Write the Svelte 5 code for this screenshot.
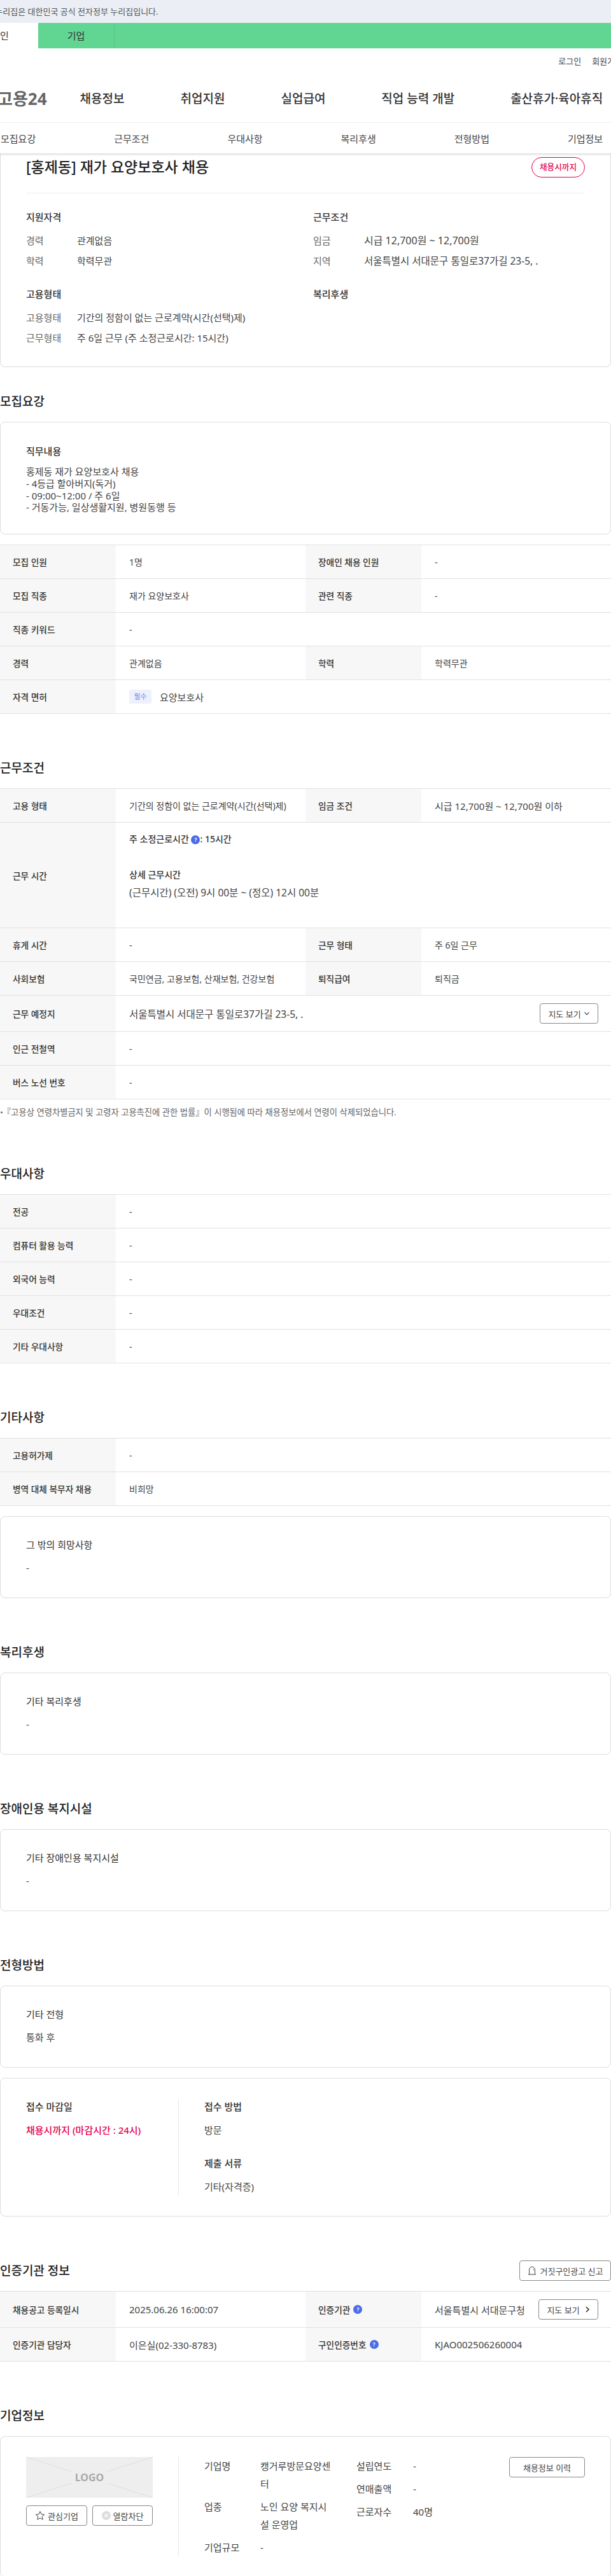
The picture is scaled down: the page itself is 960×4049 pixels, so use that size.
<script>
  const navItems = ["채용정보", "취업지원", "실업급여", "직업 능력 개발", "출산휴가·육아휴직"];
  const tabs = ["모집요강", "근무조건", "우대사항", "복리후생", "전형방법", "기업정보"];

  const recruitRows = [
    ["모집 인원", "1명", "장애인 채용 인원", "-"],
    ["모집 직종", "재가 요양보호사", "관련 직종", "-"],
    ["직종 키워드", "-"],
    ["경력", "관계없음", "학력", "학력무관"],
  ];
  const prefRows = [
    ["전공", "-"],
    ["컴퓨터 활용 능력", "-"],
    ["외국어 능력", "-"],
    ["우대조건", "-"],
    ["기타 우대사항", "-"],
  ];
  const etcRows = [
    ["고용허가제", "-"],
    ["병역 대체 복무자 채용", "비희망"],
  ];
  const salary = "시급 12,700원 ~ 12,700원 이하";
</script>

{#snippet row(cells)}
  <div class="row" class:wide={cells.length === 2}>
    <div class="th">{cells[0]}</div>
    <div class="td">{cells[1]}</div>
    {#if cells.length > 2}
      <div class="th">{cells[2]}</div>
      <div class="td" class:big={cells[3] === salary}>{cells[3]}</div>
    {/if}
  </div>
{/snippet}

{#snippet help()}
  <span class="help">?</span>
{/snippet}

<div class="page">
  <div class="gov">이 누리집은 대한민국 공식 전자정부 누리집입니다.</div>

  <div class="green">
    <span class="mode on">개인</span>
    <span class="mode">기업</span>
  </div>

  <div class="util">
    <span>로그인</span>
    <span>회원가입</span>
  </div>

  <nav class="gnb">
    <span class="logo">고용24</span>
    {#each navItems as item}
      <span class="gnb-item">{item}</span>
    {/each}
  </nav>

  <div class="tabs">
    {#each tabs as tab}
      <span class="tab">{tab}</span>
    {/each}
  </div>

  <div class="card summary">
    <div class="summary-head">
      <h1>[홍제동] 재가 요양보호사 채용</h1>
      <span class="deadline">채용시까지</span>
    </div>
    <div class="summary-grid">
      <div>
        <h3>지원자격</h3>
        <div class="kv"><span>경력</span><span>관계없음</span></div>
        <div class="kv"><span>학력</span><span>학력무관</span></div>
      </div>
      <div>
        <h3>근무조건</h3>
        <div class="kv"><span>임금</span><span class="pay">시급 12,700원 ~ 12,700원</span></div>
        <div class="kv"><span>지역</span><span class="addr">서울특별시 서대문구 통일로37가길 23-5, .</span></div>
      </div>
      <div>
        <h3>고용형태</h3>
        <div class="kv"><span>고용형태</span><span>기간의 정함이 없는 근로계약(시간(선택)제)</span></div>
        <div class="kv"><span>근무형태</span><span>주 6일 근무 (주 소정근로시간: 15시간)</span></div>
      </div>
      <div>
        <h3>복리후생</h3>
      </div>
    </div>
  </div>

  <section class="first">
    <h2>모집요강</h2>
    <div class="card text-card job">
      <h3>직무내용</h3>
      <p>홍제동 재가 요양보호사 채용<br />- 4등급 할아버지(독거)<br />- 09:00~12:00 / 주 6일<br />- 거동가능, 일상생활지원, 병원동행 등</p>
    </div>
    <div class="table after-card">
      {#each recruitRows as cells}
        {@render row(cells)}
      {/each}
      <div class="row wide">
        <div class="th">자격 면허</div>
        <div class="td big"><span class="must">필수</span>요양보호사</div>
      </div>
    </div>
  </section>

  <section>
    <h2>근무조건</h2>
    <div class="table">
      {@render row(["고용 형태", "기간의 정함이 없는 근로계약(시간(선택)제)", "임금 조건", salary])}
      <div class="row wide">
        <div class="th">근무 시간</div>
        <div class="td hours">
          <strong>주 소정근로시간 {@render help()}: 15시간</strong><br /><br />
          <span class="sub">상세 근무시간</span><br />
          <span class="addr">(근무시간) (오전) 9시 00분 ~ (정오) 12시 00분</span><br /><br />
        </div>
      </div>
      {@render row(["휴게 시간", "-", "근무 형태", "주 6일 근무"])}
      {@render row(["사회보험", "국민연금, 고용보험, 산재보험, 건강보험", "퇴직급여", "퇴직금"])}
      <div class="row wide">
        <div class="th">근무 예정지</div>
        <div class="td between">
          <span class="addr">서울특별시 서대문구 통일로37가길 23-5, .</span>
          <button class="btn map">
            지도 보기
            <svg width="10" height="10" viewBox="0 0 10 10" fill="none" stroke="#444" stroke-width="1.2"><path d="M1.5 3.2 5 6.8l3.5-3.6" /></svg>
          </button>
        </div>
      </div>
      {@render row(["인근 전철역", "-"])}
      {@render row(["버스 노선 번호", "-"])}
    </div>
    <p class="note">『고용상 연령차별금지 및 고령자 고용촉진에 관한 법률』이 시행됨에 따라 채용정보에서 연령이 삭제되었습니다.</p>
  </section>

  <section class="pref">
    <h2>우대사항</h2>
    <div class="table">
      {#each prefRows as cells}
        {@render row(cells)}
      {/each}
    </div>
  </section>

  <section>
    <h2>기타사항</h2>
    <div class="table">
      {#each etcRows as cells}
        {@render row(cells)}
      {/each}
    </div>
    <div class="card text-card after-card">
      <h3>그 밖의 희망사항</h3>
      <p>-</p>
    </div>
  </section>

  <section>
    <h2>복리후생</h2>
    <div class="card text-card">
      <h3>기타 복리후생</h3>
      <p>-</p>
    </div>
  </section>

  <section>
    <h2>장애인용 복지시설</h2>
    <div class="card text-card">
      <h3>기타 장애인용 복지시설</h3>
      <p>-</p>
    </div>
  </section>

  <section>
    <h2>전형방법</h2>
    <div class="card text-card">
      <h3>기타 전형</h3>
      <p>통화 후</p>
    </div>
    <div class="card apply after-card">
      <div class="apply-left">
        <h3>접수 마감일</h3>
        <p class="red">채용시까지 (마감시간 : 24시)</p>
      </div>
      <div class="apply-right">
        <h3>접수 방법</h3>
        <p>방문</p>
        <h3 class="docs">제출 서류</h3>
        <p>기타(자격증)</p>
      </div>
    </div>
  </section>

  <section>
    <div class="heading-row">
      <h2>인증기관 정보</h2>
      <button class="btn report">
        <svg width="16" height="16" viewBox="0 0 16 16" fill="none" stroke="#444" stroke-width="1"><path d="M3.500 14V7a4.500 5 0 0 1 9 0v7M2 14h12M9.500 5.500a2 2 0 0 1 1 2" /></svg>
        거짓구인광고 신고
      </button>
    </div>
    <div class="table">
      <div class="row">
        <div class="th">채용공고 등록일시</div>
        <div class="td big">2025.06.26 16:00:07</div>
        <div class="th">인증기관 {@render help()}</div>
        <div class="td big between">
          서울특별시 서대문구청
          <button class="btn map2">
            지도 보기
            <svg width="8" height="12" viewBox="0 0 8 12" fill="none" stroke="#333" stroke-width="1.6"><path d="M2 2l4 4-4 4" /></svg>
          </button>
        </div>
      </div>
      <div class="row">
        <div class="th">인증기관 담당자</div>
        <div class="td big">이은실(02-330-8783)</div>
        <div class="th">구인인증번호 {@render help()}</div>
        <div class="td big">KJAO002506260004</div>
      </div>
    </div>
  </section>

  <section>
    <h2>기업정보</h2>
    <div class="card company">
      <div class="company-left">
        <div class="logo-box">
          <svg width="199" height="64" viewBox="0 0 199 64" stroke="#ddd" stroke-width="1">
            <path d="M0 0l72 23M199 0l-72 23M0 64l72-23M199 64l-72-23" />
          </svg>
          <span>LOGO</span>
        </div>
        <div class="company-btns">
          <button class="btn">
            <svg width="16" height="16" viewBox="0 0 16 16" fill="none" stroke="#444" stroke-width="1"><path d="M8 1.500l2 4.400 4.700.5-3.500 3.200 1 4.700L8 11.900 3.800 14.300l1-4.700L1.300 6.400 6 5.900z" /></svg>
            관심기업
          </button>
          <button class="btn">
            <svg width="14" height="14" viewBox="0 0 14 14"><circle cx="7" cy="7" r="7" fill="#ddd" /><path d="M4.500 4.500l5 5M9.500 4.500l-5 5" stroke="#fff" stroke-width="1.300" /></svg>
            열람차단
          </button>
        </div>
      </div>
      <div class="company-info">
        <div class="info-col first-col">
          <div class="info"><span>기업명</span><span>캥거루방문요양센터</span></div>
          <div class="info"><span>업종</span><span>노인 요양 복지시설 운영업</span></div>
          <div class="info"><span>기업규모</span><span>-</span></div>
        </div>
        <div class="info-col second-col">
          <div class="info"><span>설립연도</span><span>-</span></div>
          <div class="info"><span>연매출액</span><span>-</span></div>
          <div class="info"><span>근로자수</span><span>40명</span></div>
        </div>
        <button class="btn history">채용정보 이력</button>
      </div>
    </div>
  </section>
</div>

<style>
  :global(body) {
    margin: 0;
    background: #fff;
  }

  .page {
    width: 960px;
    height: 4049px;
    overflow: hidden;
    font-family: "Noto Sans", "Noto Sans CJK KR", sans-serif;
    font-size: 15px;
    color: #444;
  }

  h1, h2, h3, p {
    margin: 0;
  }

  .gov {
    height: 36px;
    line-height: 36px;
    background: #ebeff5;
    font-size: 13px;
    color: #555;
    margin-left: -23px;
  }

  .green {
    display: flex;
    height: 40px;
    background: #61d592;
    margin-left: -60px;
  }

  .mode {
    width: 119px;
    line-height: 40px;
    text-align: center;
    color: #333;
    border-right: 1px solid #57c787;
  }

  .mode.on {
    background: #fff;
    width: 120px;
    border-right: 0;
  }

  .util {
    display: flex;
    justify-content: flex-end;
    gap: 17px;
    height: 39px;
    line-height: 40px;
    font-size: 13px;
    margin-right: -18px;
  }

  .gnb {
    display: flex;
    align-items: center;
    gap: 88px;
    height: 77px;
    border-bottom: 1px solid #eee;
    white-space: nowrap;
  }

  .logo {
    font-size: 26px;
    font-weight: 700;
    color: #666;
    margin-left: -4px;
    margin-right: -36px;
  }

  .gnb-item {
    font-size: 19px;
    font-weight: 500;
    color: #333;
  }

  .tabs {
    position: relative;
    display: flex;
    height: 48px;
    align-items: center;
    padding-left: 1px;
    background: #fff;
    box-shadow: 0 2px 3px rgba(0, 0, 0, 0.14);
  }

  .tab {
    flex: 0 0 178.2px;
    white-space: nowrap;
  }

  .card {
    border: 1px solid #ddd;
    border-radius: 8px;
  }

  .summary {
    border-top: 0;
    border-radius: 0 0 8px 8px;
    padding: 6px 40px 30px;
    height: 336px;
    box-sizing: border-box;
  }

  .summary-head {
    display: flex;
    justify-content: space-between;
    align-items: center;
    height: 32px;
    padding-bottom: 24px;
    border-bottom: 1px solid #eee;
  }

  h1 {
    font-size: 23px;
    font-weight: 500;
    line-height: 32px;
    color: #222;
    margin-top: -2px;
  }

  .deadline {
    box-sizing: border-box;
    width: 84px;
    height: 32px;
    line-height: 29px;
    text-align: center;
    border: 1px solid #e5004f;
    border-radius: 16px;
    color: #e5004f;
    font-size: 12.6px;
    font-weight: 500;
  }

  h3 {
    font-size: 15px;
    font-weight: 500;
    line-height: 24px;
    color: #333;
  }

  .summary-grid {
    display: grid;
    grid-template-columns: 451px 1fr;
    row-gap: 24px;
    margin-top: 25px;
  }

  .summary-grid h3 {
    margin-bottom: 9px;
  }

  .kv {
    display: flex;
    line-height: 32px;
  }

  .kv span:first-child {
    flex: 0 0 80px;
    color: #666;
  }

  .pay {
    font-size: 16px;
  }

  .addr {
    font-size: 15.5px;
  }

  h2 {
    font-size: 19px;
    font-weight: 500;
    line-height: 28px;
    color: #222;
    margin-bottom: 18px;
  }

  section {
    margin-top: 71px;
  }

  section.first {
    margin-top: 40px;
  }

  section.pref {
    margin-top: 74px;
  }

  .text-card {
    padding: 32px 40px 35px;
  }

  .text-card h3 {
    margin-bottom: 12px;
    font-weight: 400;
    color: #333;
  }

  .text-card p {
    line-height: 24px;
  }

  .job {
    padding: 33px 40px 32px;
  }

  .job h3 {
    font-weight: 500;
    margin-bottom: 11px;
  }

  .job p {
    line-height: 18.8px;
  }

  .after-card {
    margin-top: 16px;
  }

  .table {
    border-top: 1px solid #e1e1e1;
  }

  .row {
    display: grid;
    grid-template-columns: 182px 298px 182px 298px;
    border-bottom: 1px solid #e1e1e1;
    min-height: 52px;
  }

  .row.wide {
    grid-template-columns: 182px 1fr;
  }

  .th {
    display: flex;
    align-items: center;
    gap: 5px;
    padding-left: 20px;
    background: #f7f7f7;
    font-size: 13.7px;
    font-weight: 500;
    color: #333;
    white-space: nowrap;
  }

  .td {
    display: flex;
    align-items: center;
    padding-left: 21px;
    font-size: 14px;
    white-space: nowrap;
  }

  .td.big {
    font-size: 15px;
  }

  .td.between {
    justify-content: space-between;
    padding-right: 20px;
  }

  .td.hours {
    display: block;
    padding-top: 12px;
    padding-bottom: 12px;
    line-height: 28px;
  }

  .hours strong,
  .hours .sub {
    font-weight: 500;
    color: #333;
  }

  .help {
    display: inline-block;
    width: 14px;
    height: 14px;
    line-height: 14px;
    border-radius: 50%;
    background: #4a6ce8;
    color: #fff;
    font-size: 8px;
    font-weight: 700;
    text-align: center;
    vertical-align: 1px;
  }

  .must {
    width: 35px;
    height: 22px;
    line-height: 22px;
    margin-right: 13px;
    border-radius: 3px;
    background: #eef1fd;
    color: #6b86ee;
    font-size: 11px;
    text-align: center;
  }

  .note {
    position: relative;
    margin-top: 11px;
    padding-left: 4px;
    font-size: 13.3px;
    line-height: 18px;
    color: #666;
  }

  .note::before {
    content: "";
    position: absolute;
    left: 1px;
    top: 8px;
    width: 3px;
    height: 3px;
    border-radius: 50%;
    background: #666;
  }

  .btn {
    display: inline-flex;
    align-items: center;
    justify-content: center;
    gap: 4px;
    box-sizing: border-box;
    height: 32px;
    padding: 0;
    border: 1px solid #888;
    border-radius: 4px;
    background: #fff;
    color: #444;
    font: inherit;
    font-size: 13px;
  }

  .map {
    width: 92px;
  }

  .map2 {
    width: 94px;
    gap: 8px;
  }

  .report {
    width: 144px;
  }

  .row:has(.map) .td,
  .row:has(.map2) .td {
    padding-top: 12px;
    padding-bottom: 12px;
  }

  .heading-row {
    display: flex;
    justify-content: space-between;
    align-items: center;
    height: 28px;
    margin-bottom: 18px;
  }

  .heading-row h2 {
    margin: 0;
  }

  .apply {
    display: flex;
    padding: 32px 40px;
  }

  .apply-left {
    width: 239px;
    border-right: 1px solid #e8e8e8;
  }

  .apply-right {
    padding-left: 40px;
    height: 152px;
  }

  .apply h3 {
    margin-bottom: 13px;
  }

  .apply p {
    line-height: 24px;
  }

  .apply .docs {
    margin-top: 28px;
  }

  .red {
    color: #e5004f;
    font-weight: 500;
  }

  .company {
    display: flex;
    padding: 32px 40px;
  }

  .company-left {
    width: 239px;
    height: 156px;
    border-right: 1px solid #e8e8e8;
  }

  .logo-box {
    position: relative;
    display: flex;
    align-items: center;
    justify-content: center;
    width: 199px;
    height: 64px;
    background: #eee;
  }

  .logo-box svg {
    position: absolute;
    left: 0;
    top: 0;
  }

  .logo-box span {
    position: relative;
    font-size: 16px;
    font-weight: 700;
    color: #aaa;
  }

  .company-btns {
    display: grid;
    grid-template-columns: 96px 95px;
    gap: 8px;
    width: 199px;
    margin-top: 12px;
  }

  .company-info {
    display: flex;
    flex: 1;
    padding-left: 40px;
  }

  .info-col {
    display: flex;
    flex-direction: column;
    gap: 8px;
    line-height: 28px;
  }

  .first-col {
    flex: 0 0 239px;
  }

  .info {
    display: flex;
  }

  .first-col .info span:first-child {
    flex: 0 0 88px;
  }

  .first-col .info span:last-child {
    width: 115px;
    word-break: break-all;
  }

  .second-col .info span:first-child {
    flex: 0 0 89px;
  }

  .history {
    width: 119px;
    margin-left: auto;
  }
</style>
